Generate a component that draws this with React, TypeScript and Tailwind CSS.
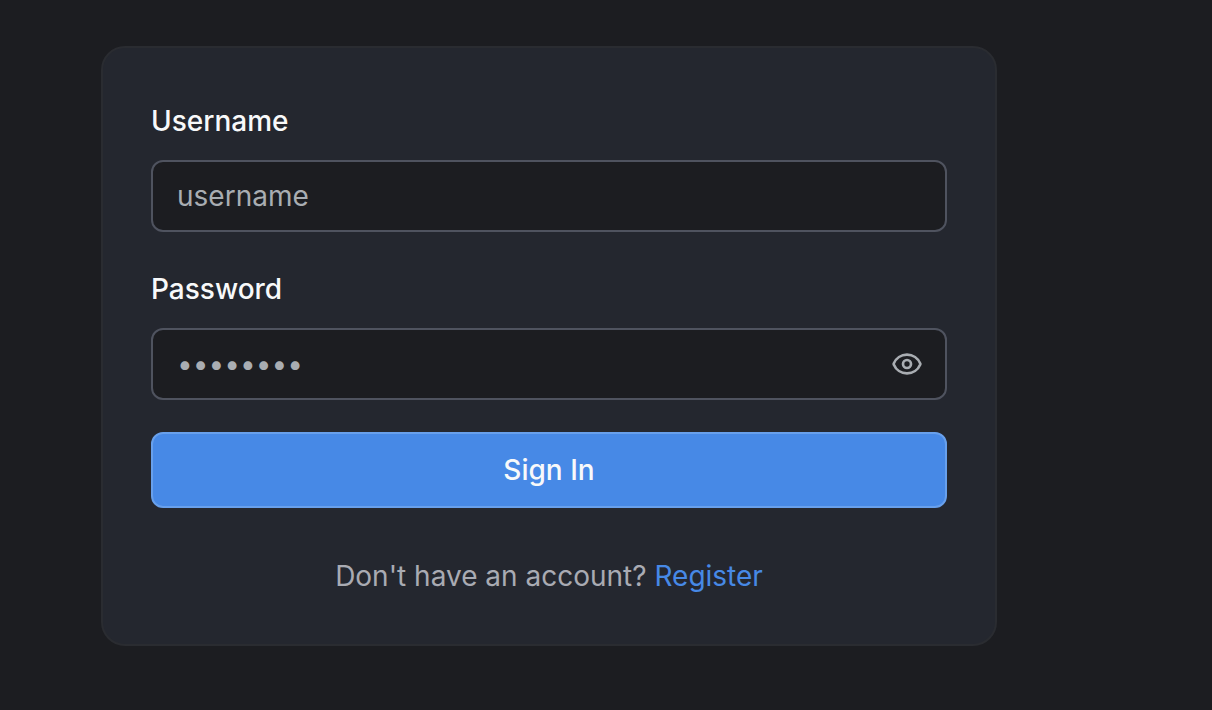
import React from 'react';
import { Eye } from 'lucide-react';

export default function App() {
  return (
    <main className="flex h-[710px] w-[1212px] flex-col overflow-hidden bg-[#1c1d21] pt-[46px] font-['Inter',sans-serif] text-[28px] leading-[40px]">
      <form className="ml-[101px] flex h-[600px] w-[896px] shrink-0 flex-col rounded-[24px] border-2 border-[#2a2c31] bg-[#24272f] px-12 pt-[53px]">
        <label className="font-medium text-[#f8f9fa]">Username</label>
        <div className="mt-[19px] flex h-[72px] shrink-0 items-center rounded-[12px] border-2 border-[#4f535f] bg-[#1c1d21] px-6 text-[#a9adb2]">username</div>
        <label className="mt-[37px] font-medium text-[#f8f9fa]">Password</label>
        <div className="mt-[19px] flex h-[72px] shrink-0 items-center justify-between rounded-[12px] border-2 border-[#4f535f] bg-[#1c1d21] pr-[22px] pl-6 text-[#a9adb2]">
          <span>••••••••</span>
          <Eye size={32} strokeWidth={2} />
        </div>
        <button type="button" className="mt-8 h-[76px] shrink-0 rounded-[12px] border-2 border-[#68a0ec] bg-[#4789e6] font-medium text-[#f8f9fa]">Sign In</button>
        <p className="mt-12 text-center text-[#a9abb3]">Don't have an account? <a className="text-[#4789e6]">Register</a></p>
      </form>
    </main>
  );
}
